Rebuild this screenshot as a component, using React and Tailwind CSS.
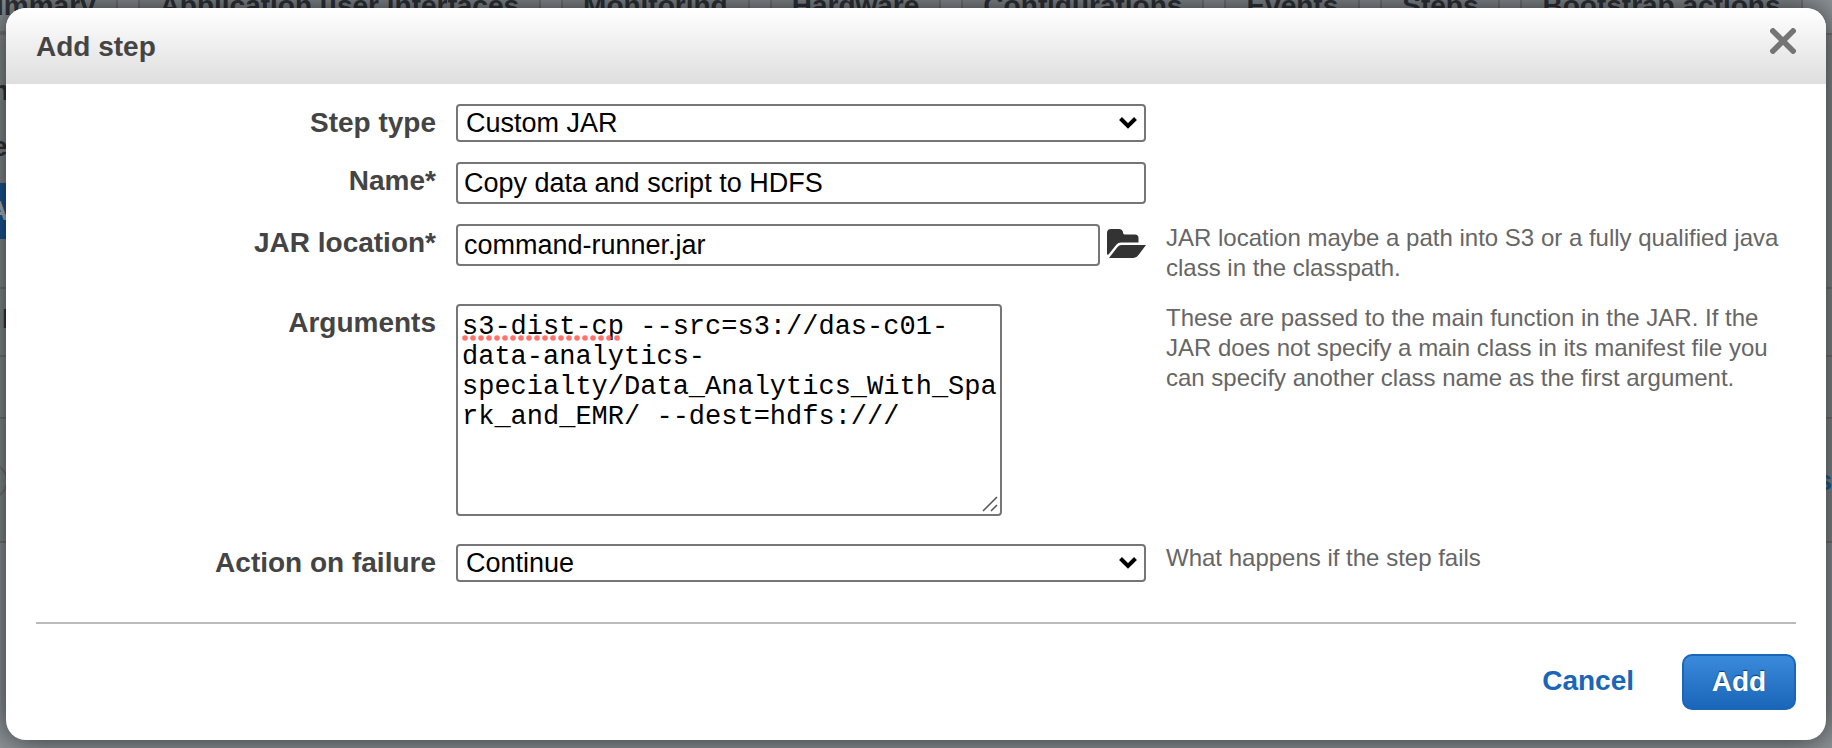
import React from "react";

const tabs = [
  "Summary",
  "Application user interfaces",
  "Monitoring",
  "Hardware",
  "Configurations",
  "Events",
  "Steps",
  "Bootstrap actions",
];

function Backdrop() {
  return (
    <div aria-hidden="true" className="absolute inset-0 overflow-hidden bg-[#8f959a] text-[28px] leading-9 font-bold text-[#30353a]">
      <div className="-mt-3.5 -ml-[54px] flex gap-5">
        {tabs.map((t) => (
          <div key={t} className="shrink-0 whitespace-nowrap border-x-2 border-b-2 border-[#74797d] bg-[#888e92] px-5 pt-0.5 pb-[7px]">
            {t}
          </div>
        ))}
      </div>
      <div className="h-[510px] border-t-2 border-[#74797d] bg-[#878d91]">
        <div className="-ml-2 flex h-[150px] flex-col">
          <span className="mt-[38px]">n</span>
          <span className="mt-5">e</span>
        </div>
        <div className="-mt-0.5 -ml-5 flex h-14 w-40 items-center bg-[#1c5a99] pl-2 text-[#b4bbc1]">Ad</div>
        <div className="mt-12 h-[70px] border-y-2 border-[#74797d] pt-3 pl-0.5">I</div>
        <div className="h-[62px] border-b-2 border-[#74797d]" />
        <div className="flex h-[124px] items-start justify-between border-b-2 border-[#74797d] pt-11">
          <span className="-ml-7 size-9 rounded-full border-2 border-[#74797d]" />
          <span className="text-[#23649f]">s</span>
        </div>
      </div>
    </div>
  );
}

function Row({ id, label, help, children }) {
  return (
    <div className="grid grid-cols-[minmax(0,400fr)_minmax(0,690fr)_minmax(0,630fr)] gap-x-5">
      <label htmlFor={id} className="text-right text-[28px] leading-[38px] font-bold text-[#444]">
        {label}
      </label>
      <div>{children}</div>
      {help && <p className="-mt-px pb-px text-2xl leading-[30px] text-[#666]">{help}</p>}
    </div>
  );
}

const box = "block w-full rounded-[4px] border-2 border-[#767676] bg-white text-[27px] text-black outline-none";

function Select({ id, options }) {
  return (
    <div className="relative">
      <select id={id} className={box + " h-[38px] appearance-none pl-2 leading-8"}>
        {options.map((o) => (
          <option key={o}>{o}</option>
        ))}
      </select>
      <svg viewBox="0 0 18 12" className="pointer-events-none absolute top-[13px] right-[9px] h-3 w-[18px]" fill="none" stroke="#000" strokeWidth="4">
        <path d="M1.5 1.5 9 9l7.500-7.500" />
      </svg>
    </div>
  );
}

export default function App() {
  return (
    <div className="relative min-h-screen overflow-hidden px-1.5 py-2 font-['Liberation_Sans',Arial,sans-serif]">
      <Backdrop />
      <section role="dialog" aria-labelledby="title" className="relative overflow-hidden rounded-[20px] bg-white shadow-[0_0_32px_rgba(0,0,0,0.7)]">
        <header className="flex h-[76px] items-center justify-between bg-linear-to-b from-white to-[#dedede] px-[30px]">
          <h1 id="title" className="pt-0.5 text-[28px] leading-9 font-bold text-[#444]">Add step</h1>
          <button type="button" aria-label="Close" className="mb-2.5">
            <svg viewBox="0 0 26 26" className="size-[26px]" fill="none" stroke="#757575" strokeWidth="5.500">
              <path d="M1 1l24 24M25 1 1 25" />
            </svg>
          </button>
        </header>

        <form className="px-[30px] pt-5 pb-[30px]" onSubmit={(e) => e.preventDefault()}>
          <div className="flex flex-col gap-5">
            <Row id="type" label="Step type">
              <Select id="type" options={["Custom JAR"]} />
            </Row>
            <Row id="name" label="Name*">
              <input id="name" type="text" defaultValue="Copy data and script to HDFS" className={box + " h-[42px] px-1.5"} />
            </Row>
            <Row id="jar" label="JAR location*" help="JAR location maybe a path into S3 or a fully qualified java class in the classpath.">
              <div className="flex items-start gap-[7px]">
                <input id="jar" type="text" defaultValue="command-runner.jar" className={box + " h-[42px] min-w-0 flex-1 px-1.5"} />
                <button type="button" aria-label="Browse" className="mt-[5px]">
                  <svg viewBox="0 0 39 29" className="h-[29px] w-[39px]" fill="#333">
                    <path d="M0 24.500V4Q0 0 4 0h8q3 0 4 3v1q.5 1.500 2 1.500h10q3.500 0 3.500 3.500v4.500H14q-3 0-4.500 2L1.500 25.500Q0 26.500 0 24.500z" />
                    <path d="M2 29l8.500-11q1.500-2 4-2H39l-7.500 10q-2 3-5 3z" />
                  </svg>
                </button>
              </div>
            </Row>
            <Row
              id="args"
              label="Arguments"
              help="These are passed to the main function in the JAR. If the JAR does not specify a main class in its manifest file you can specify another class name as the first argument."
            >
              <div className="relative mb-2 w-[546px] max-w-full">
                <textarea
                  id="args"
                  spellCheck={false}
                  defaultValue="s3-dist-cp --src=s3://das-c01-data-analytics-specialty/Data_Analytics_With_Spark_and_EMR/ --dest=hdfs:///"
                  className="block h-[212px] w-full resize-none overflow-hidden rounded-[4px] border-2 border-[#767676] bg-white pt-1.5 pl-1 font-['Liberation_Mono','Courier_New',monospace] text-[27px] leading-[30px] text-black outline-none"
                />
                <svg className="pointer-events-none absolute top-[31px] left-1.5 h-1.5 w-[160px]" fill="#ff5a50" fillOpacity="0.85">
                  {Array.from({ length: 20 }, (_, i) => (
                    <circle key={i} cx={3 + i * 8} cy="3" r="2.800" />
                  ))}
                </svg>
                <svg viewBox="0 0 16 16" className="pointer-events-none absolute right-1 bottom-1 size-4" stroke="#555" strokeWidth="1.500">
                  <path d="M1 15 15 1M9 15l6-6" />
                </svg>
              </div>
            </Row>
            <Row id="fail" label="Action on failure" help="What happens if the step fails">
              <Select id="fail" options={["Continue"]} />
            </Row>
          </div>

          <footer className="mt-10 flex items-center justify-end gap-12 border-t-2 border-[#bbb] pt-[30px]">
            <button type="button" className="pb-0.5 text-[28px] leading-9 font-bold text-[#1a66b8]">Cancel</button>
            <button
              type="submit"
              className="h-14 w-[114px] rounded-[10px] border-2 border-[#1a66b8] bg-linear-to-b from-[#3a8adc] to-[#1a66b8] text-[28px] leading-9 font-bold text-white [text-shadow:0_-1px_1px_#0c3f78]"
            >
              Add
            </button>
          </footer>
        </form>
      </section>
    </div>
  );
}
